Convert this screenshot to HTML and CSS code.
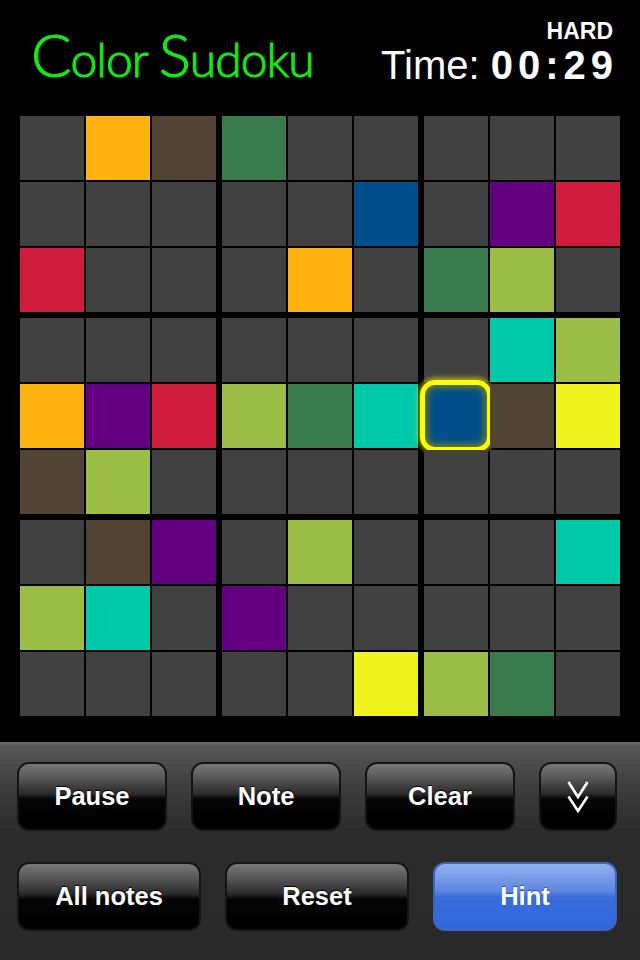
FILE: index.html
```html
<!DOCTYPE html>
<html lang="en">
<head>
<meta charset="utf-8">
<title>Color Sudoku</title>
<link rel="stylesheet" href="styles.css">
</head>
<body>
<main class="app">
  <header class="header">
    <h1 class="title"><span class="cap">C</span>olor <span class="cap">S</span>udoku</h1>
    <div class="status">
      <div class="level">HARD</div>
      <div class="time">Time: <span class="clock">00:29</span></div>
    </div>
  </header>
  <section class="board">
    <div class="box">
      <div class="cell"></div><div class="cell orange"></div><div class="cell brown"></div>
      <div class="cell"></div><div class="cell"></div><div class="cell"></div>
      <div class="cell red"></div><div class="cell"></div><div class="cell"></div>
    </div>
    <div class="box">
      <div class="cell green"></div><div class="cell"></div><div class="cell"></div>
      <div class="cell"></div><div class="cell"></div><div class="cell blue"></div>
      <div class="cell"></div><div class="cell orange"></div><div class="cell"></div>
    </div>
    <div class="box">
      <div class="cell"></div><div class="cell"></div><div class="cell"></div>
      <div class="cell"></div><div class="cell purple"></div><div class="cell red"></div>
      <div class="cell green"></div><div class="cell lime"></div><div class="cell"></div>
    </div>
    <div class="box">
      <div class="cell"></div><div class="cell"></div><div class="cell"></div>
      <div class="cell orange"></div><div class="cell purple"></div><div class="cell red"></div>
      <div class="cell brown"></div><div class="cell lime"></div><div class="cell"></div>
    </div>
    <div class="box">
      <div class="cell"></div><div class="cell"></div><div class="cell"></div>
      <div class="cell lime"></div><div class="cell green"></div><div class="cell teal"></div>
      <div class="cell"></div><div class="cell"></div><div class="cell"></div>
    </div>
    <div class="box">
      <div class="cell"></div><div class="cell teal"></div><div class="cell lime"></div>
      <div class="cell blue selected"></div><div class="cell brown"></div><div class="cell yellow"></div>
      <div class="cell"></div><div class="cell"></div><div class="cell"></div>
    </div>
    <div class="box">
      <div class="cell"></div><div class="cell brown"></div><div class="cell purple"></div>
      <div class="cell lime"></div><div class="cell teal"></div><div class="cell"></div>
      <div class="cell"></div><div class="cell"></div><div class="cell"></div>
    </div>
    <div class="box">
      <div class="cell"></div><div class="cell lime"></div><div class="cell"></div>
      <div class="cell purple"></div><div class="cell"></div><div class="cell"></div>
      <div class="cell"></div><div class="cell"></div><div class="cell yellow"></div>
    </div>
    <div class="box">
      <div class="cell"></div><div class="cell"></div><div class="cell teal"></div>
      <div class="cell"></div><div class="cell"></div><div class="cell"></div>
      <div class="cell lime"></div><div class="cell green"></div><div class="cell"></div>
    </div>
  </section>
  <section class="panel">
    <div class="row">
      <button class="btn wide">Pause</button>
      <button class="btn wide">Note</button>
      <button class="btn wide">Clear</button>
      <button class="btn small" aria-label="More">
        <svg class="chevrons" viewBox="0 0 22 32" width="22" height="32" aria-hidden="true">
          <path d="M1.5 1 L11 16 L20.5 1" />
          <path d="M1.5 15.5 L11 30 L20.5 15.5" />
        </svg>
      </button>
    </div>
    <div class="row">
      <button class="btn half">All notes</button>
      <button class="btn half">Reset</button>
      <button class="btn half hint">Hint</button>
    </div>
  </section>
</main>
</body>
</html>
```
FILE: styles.css
```css
* { box-sizing: border-box; }
html, body { margin: 0; padding: 0; background: #000; }
.app {
  width: 640px;
  height: 960px;
  display: flex;
  flex-direction: column;
  font-family: "Liberation Sans", Arial, sans-serif;
  color: #fff;
  overflow: hidden;
}
.header {
  height: 116px;
  padding: 20px 27px 0 31px;
  display: flex;
  justify-content: space-between;
  align-items: flex-start;
}
.title {
  margin: 4px 0 0;
  font-family: Lato, sans-serif;
  font-weight: 300;
  font-size: 48px;
  line-height: 60px;
  letter-spacing: -1px;
  color: #16e816;
  -webkit-text-stroke: 1px #16e816;
  white-space: nowrap;
}
.cap { font-size: 60px; }
.status { text-align: right; }
.level {
  font-weight: 700;
  font-size: 23px;
  line-height: 22px;
}
.time {
  font-size: 40px;
  line-height: 46px;
  white-space: nowrap;
}
.clock {
  font-weight: 700;
  font-size: 40px;
  letter-spacing: 5px;
  margin-right: -5px;
}
.board {
  padding-left: 20px;
  display: grid;
  grid-template-columns: repeat(3, 196px);
  grid-auto-rows: 196px;
  gap: 6px;
}
.box {
  display: grid;
  grid-template-columns: repeat(3, 64px);
  grid-auto-rows: 64px;
  gap: 2px;
}
.cell { background: #414141; position: relative; }
.orange { background: #ffb210; }
.brown { background: #514434; }
.green { background: #3a7b4d; }
.blue { background: #004f8a; }
.purple { background: #62007f; }
.red { background: #cf1c3d; }
.lime { background: #9dbe46; }
.teal { background: #00c8a8; }
.yellow { background: #f0f31e; }
.selected::after {
  content: "";
  position: absolute;
  inset: -4px;
  border: 5px solid #ffff00;
  border-radius: 15px;
  box-shadow: 0 0 5px 2px rgba(255, 255, 0, 0.6), inset 0 0 6px 3px rgba(120, 130, 30, 0.9);
}
.panel {
  margin-top: 26px;
  flex: 1;
  padding: 20px 23px 0 17px;
  display: flex;
  flex-direction: column;
  gap: 31px;
  background: linear-gradient(#6e6e6e 0, #575757 4px, #3e3e3e 44px, #2c2c2c 88px, #292929 100%);
}
.row { display: flex; gap: 24px; }
.btn {
  height: 69px;
  border: 2px solid #141414;
  border-radius: 12px;
  padding: 0;
  font-family: inherit;
  font-weight: 700;
  font-size: 25.5px;
  color: #fff;
  text-shadow: 0 -1px 1px #000;
  background: linear-gradient(#787878 0, #5c5c5c 12px, #2a2a2a 30px, #050505 35px, #000 100%);
  display: flex;
  align-items: center;
  justify-content: center;
}
.wide { width: 150px; }
.small { width: 78px; }
.half { width: 184px; }
.hint {
  border-color: #3f66bd;
  background: linear-gradient(#92afee 0, #7d9ee9 12px, #5a85e0 28px, #3a6cdc 33px, #3068dc 100%);
  text-shadow: 0 -1px 1px #2a50a0;
}
.chevrons { fill: none; stroke: #fff; stroke-width: 2.6; }
```
